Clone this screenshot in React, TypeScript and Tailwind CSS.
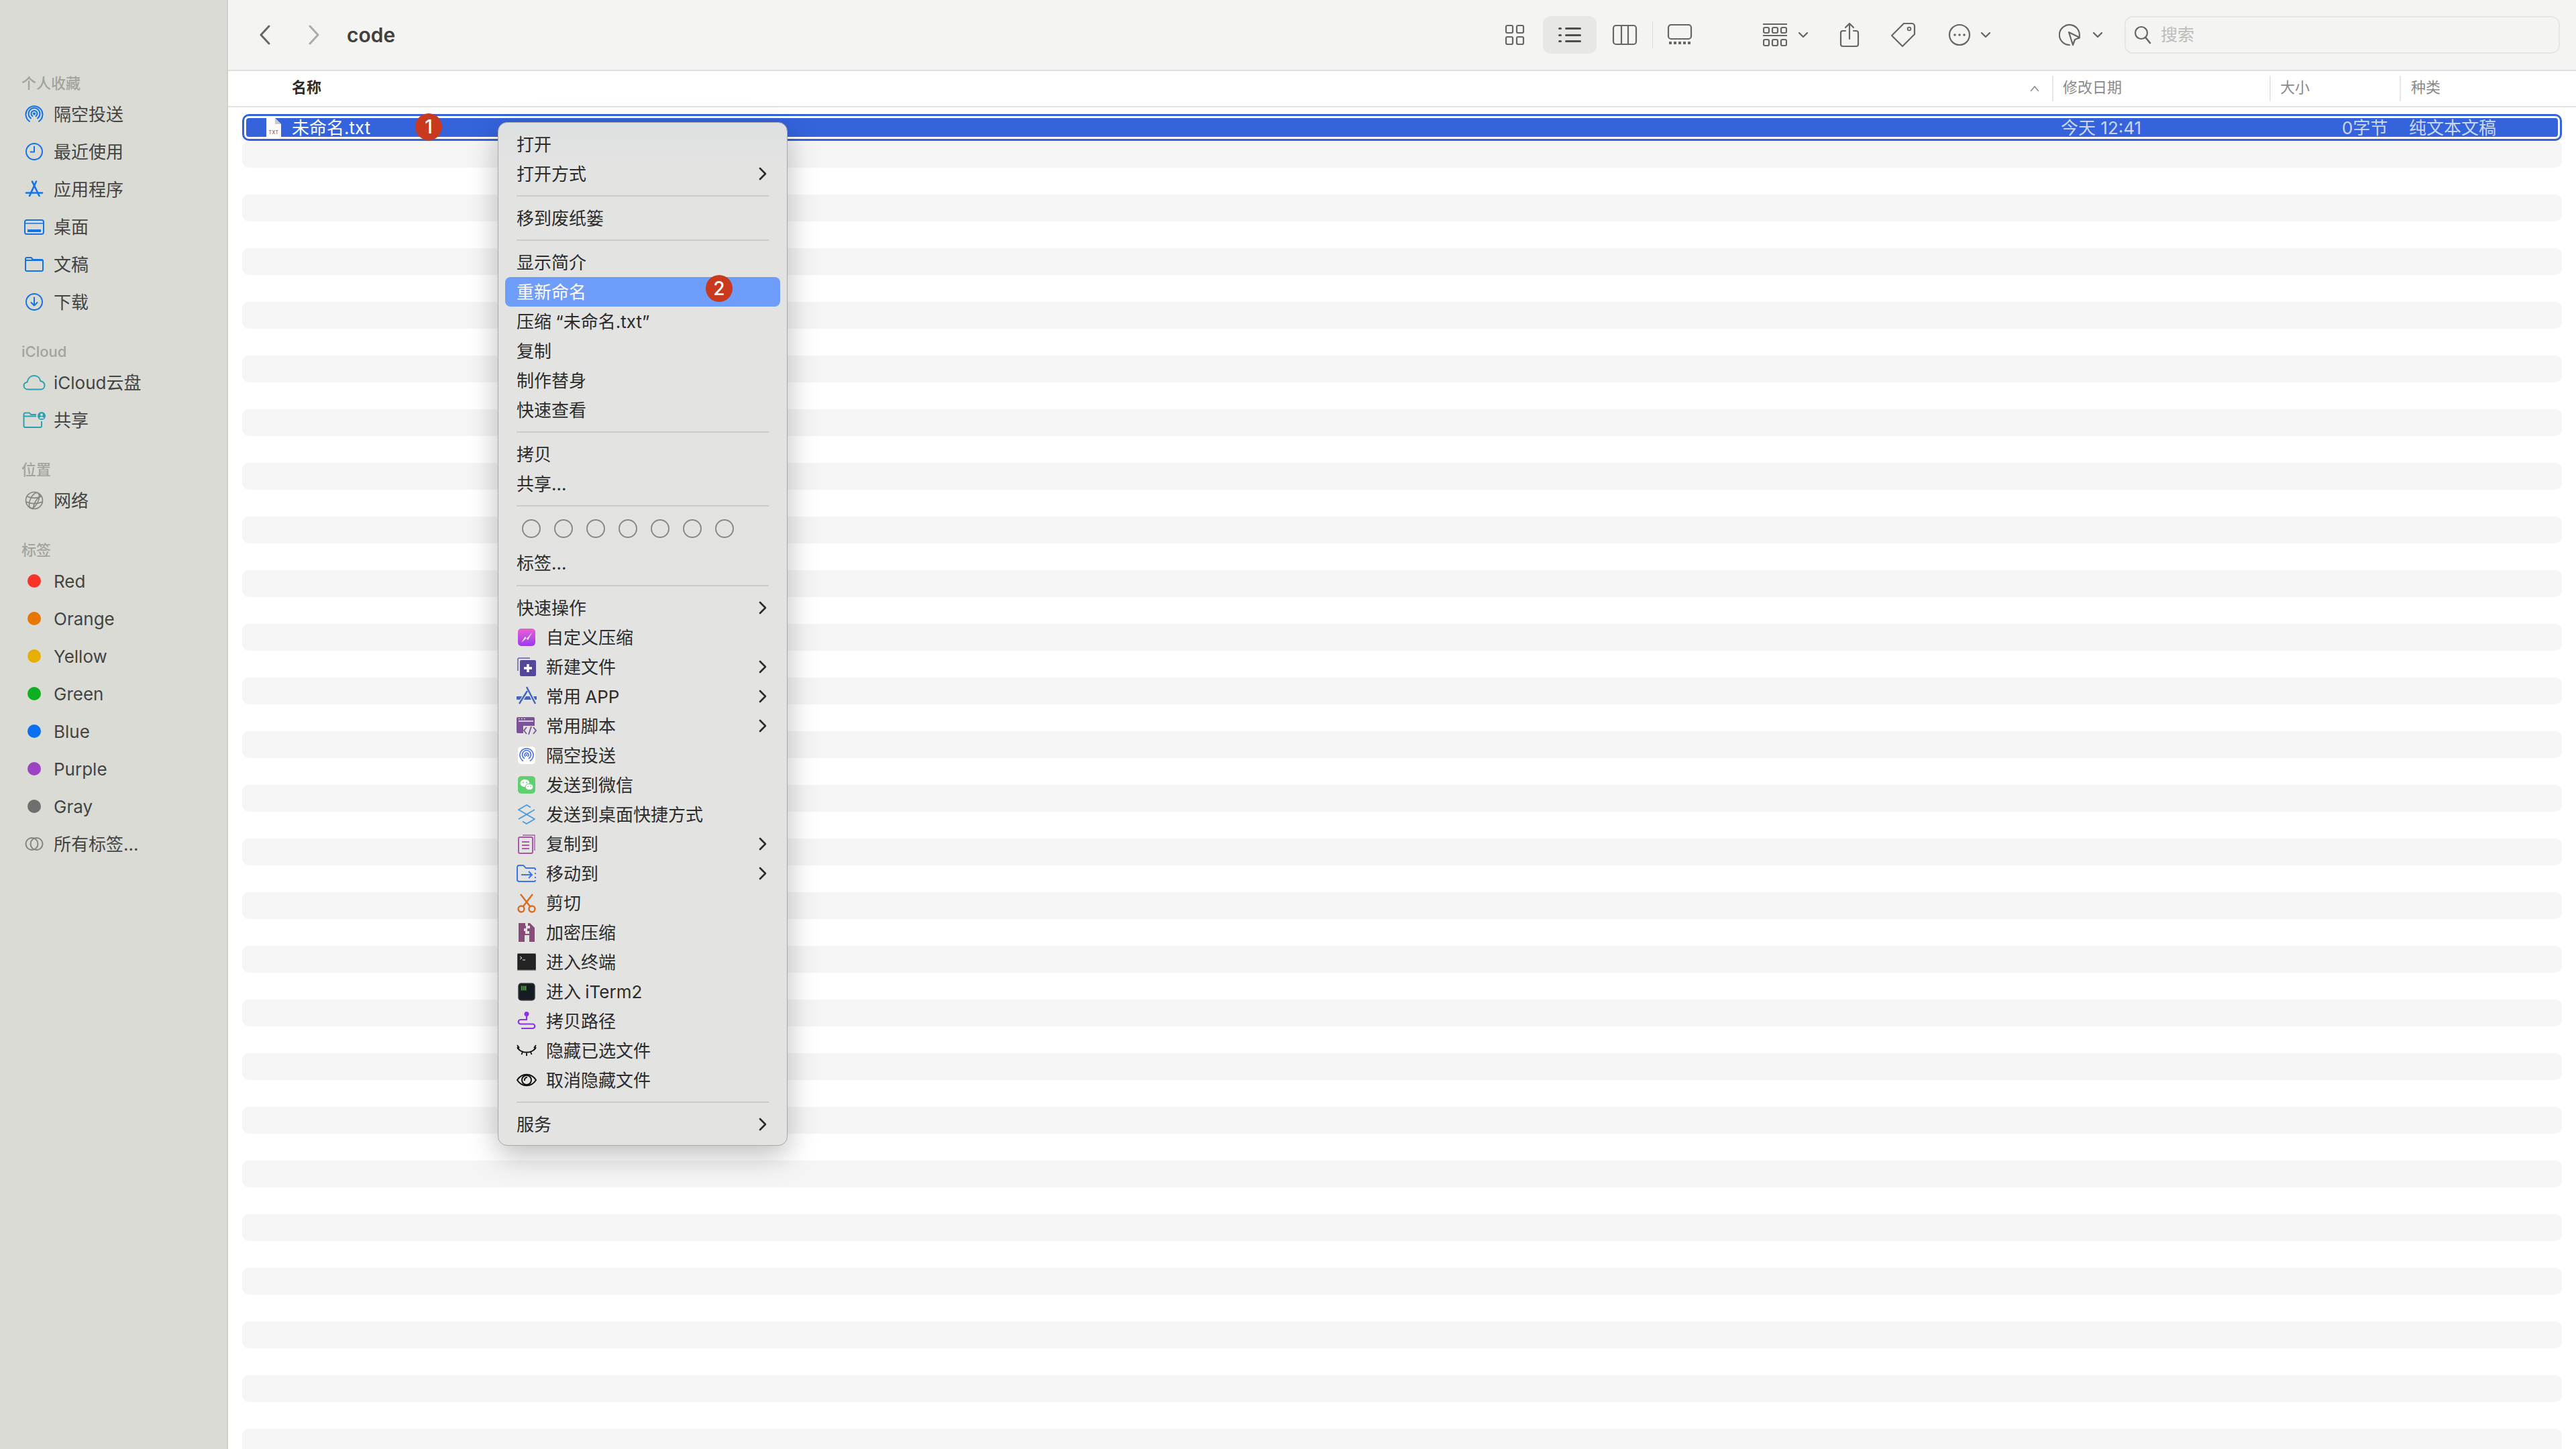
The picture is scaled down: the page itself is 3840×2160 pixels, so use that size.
import type { ReactNode } from "react";

const FONT = "[font-family:Inter,'Noto_Sans_CJK_SC',sans-serif]";

function Svg({ w, h, children, className }: { w: number; h: number; children: ReactNode; className?: string }) {
  return (
    <svg width={w} height={h} viewBox={`0 0 ${w} ${h}`} fill="none" className={className}>
      {children}
    </svg>
  );
}

/* ---------- sidebar icons ---------- */

const blue = "#1473e6";
const teal = "#2b9fb3";

const sideIcons: Record<string, ReactNode> = {
  airdrop: (
    <Svg w={28} h={28}>
      <g stroke={blue} strokeWidth={2} strokeLinecap="round">
        <path d="M7 25A12.5 12.5 0 1 1 21 25" />
        <path d="M9 20.4A8.5 8.5 0 1 1 19 20.4" />
        <path d="M11.5 17.2A4.5 4.5 0 1 1 16.5 17.2" />
      </g>
      <circle cx={14} cy={13.5} r={2} fill={blue} />
    </Svg>
  ),
  clock: (
    <Svg w={28} h={28}>
      <circle cx={14} cy={14} r={12} stroke={blue} strokeWidth={2} />
      <path d="M14 6.5V14.5H8.5" stroke={blue} strokeWidth={2} strokeLinecap="round" strokeLinejoin="round" />
    </Svg>
  ),
  apps: (
    <Svg w={28} h={28}>
      <g stroke={blue} strokeWidth={2.6} strokeLinecap="round">
        <path d="M11 2.5L21.5 24" />
        <path d="M17 2.5L7 24" />
        <path d="M2 19.5H26" />
      </g>
    </Svg>
  ),
  desktop: (
    <Svg w={30} h={24}>
      <rect x={1} y={2} width={28} height={21} rx={3} stroke={blue} strokeWidth={2} />
      <path d="M1 7H29" stroke={blue} strokeWidth={1.5} />
      <rect x={5} y={16} width={20} height={4} fill={blue} />
    </Svg>
  ),
  folder: (
    <Svg w={30} h={24}>
      <path
        d="M2 6V20A2 2 0 0 0 4 22H26A2 2 0 0 0 28 20V7A2 2 0 0 0 26 5H13L10.5 2H4A2 2 0 0 0 2 4V6H28"
        stroke={blue}
        strokeWidth={2}
        strokeLinejoin="round"
      />
    </Svg>
  ),
  download: (
    <Svg w={28} h={28}>
      <circle cx={14} cy={14} r={12} stroke={blue} strokeWidth={2} />
      <path d="M14 7.5V19.5M9.5 15L14 19.5L18.5 15" stroke={blue} strokeWidth={2} strokeLinecap="round" strokeLinejoin="round" />
    </Svg>
  ),
  cloud: (
    <Svg w={34} h={24}>
      <path
        d="M8 22.5C4 22.5 1.5 20 1.5 17C1.5 14 3.7 12 6.5 11.7C7.5 6 11.5 2 17 2C22 2 25.5 5.5 26.3 10C30 10.7 32.5 13.3 32.5 16.5C32.5 20 30 22.5 26.5 22.5Z"
        stroke={teal}
        strokeWidth={2}
        strokeLinejoin="round"
      />
    </Svg>
  ),
  shared: (
    <Svg w={34} h={24}>
      <path
        d="M20 4H12L10 1.5H3.5A2 2 0 0 0 1.5 3.5V21A2 2 0 0 0 3.5 23H26A2 2 0 0 0 28 21V14M1.5 6.5H20"
        stroke={teal}
        strokeWidth={2}
        strokeLinejoin="round"
      />
      <circle cx={28} cy={6} r={6} fill={teal} />
      <circle cx={28} cy={4.2} r={1.9} fill="#dbdbd5" />
      <path d="M24.6 10C25 8 26.4 7.3 28 7.3C29.6 7.3 31 8 31.4 10Z" fill="#dbdbd5" />
    </Svg>
  ),
  globe: (
    <Svg w={28} h={28}>
      <g stroke="#85857f" strokeWidth={1.6}>
        <circle cx={14} cy={14} r={12.5} />
        <ellipse cx={14} cy={14} rx={6} ry={12.5} transform="rotate(25 14 14)" />
        <path d="M3.5 8C10 11 18 11 24.5 8M2 16C9 19.5 19 19.5 26 16" />
        <path d="M24 6.5C17 12 13 19 12.5 26.5" />
      </g>
    </Svg>
  ),
  tags: (
    <Svg w={28} h={24}>
      <circle cx={10.5} cy={12} r={9} stroke="#85857f" strokeWidth={2} />
      <circle cx={17.5} cy={12} r={9} stroke="#85857f" strokeWidth={2} />
    </Svg>
  ),
};

type SideItem = { label: string; icon?: string; dot?: string };

const sections: { title: string; items: SideItem[] }[] = [
  {
    title: "个人收藏",
    items: [
      { label: "隔空投送", icon: "airdrop" },
      { label: "最近使用", icon: "clock" },
      { label: "应用程序", icon: "apps" },
      { label: "桌面", icon: "desktop" },
      { label: "文稿", icon: "folder" },
      { label: "下载", icon: "download" },
    ],
  },
  {
    title: "iCloud",
    items: [
      { label: "iCloud云盘", icon: "cloud" },
      { label: "共享", icon: "shared" },
    ],
  },
  { title: "位置", items: [{ label: "网络", icon: "globe" }] },
  {
    title: "标签",
    items: [
      { label: "Red", dot: "bg-[#fb3327]" },
      { label: "Orange", dot: "bg-[#e67700]" },
      { label: "Yellow", dot: "bg-[#e5b000]" },
      { label: "Green", dot: "bg-[#0db023]" },
      { label: "Blue", dot: "bg-[#0a6ff0]" },
      { label: "Purple", dot: "bg-[#9c42c2]" },
      { label: "Gray", dot: "bg-[#6f6f6f]" },
      { label: "所有标签...", icon: "tags" },
    ],
  },
];

function Sidebar() {
  return (
    <aside className="flex w-[340px] shrink-0 flex-col gap-[28px] border-r-2 border-[#d0d0ca] bg-[#dbdbd5] pt-[106px]">
      {sections.map((s) => (
        <div key={s.title}>
          <div className="flex h-9 items-center pl-[32px] text-[22px] font-medium text-[#a3a39e]">{s.title}</div>
          {s.items.map((item) => (
            <div key={item.label} className="flex h-14 items-center gap-[12px] pl-[34px] text-[26px] text-[#444442]">
              <span className="flex w-[34px] items-center justify-center">
                {item.icon ? sideIcons[item.icon] : <span className={`h-[20px] w-[20px] rounded-full ${item.dot}`} />}
              </span>
              {item.label}
            </div>
          ))}
        </div>
      ))}
    </aside>
  );
}

/* ---------- toolbar ---------- */

const ink = "#666664";

function Chevron({ className }: { className?: string }) {
  return (
    <Svg w={16} h={10} className={className}>
      <path d="M2 2L8 8L14 2" stroke={ink} strokeWidth={2.4} strokeLinecap="round" strokeLinejoin="round" />
    </Svg>
  );
}

function Toolbar() {
  return (
    <header className="flex h-[106px] shrink-0 items-center border-b-2 border-[#dededc] bg-[#f4f4f2]">
      <Svg w={18} h={30} className="ml-[46px]">
        <path d="M15 2L3 15L15 28" stroke="#666" strokeWidth={3} strokeLinecap="round" strokeLinejoin="round" />
      </Svg>
      <Svg w={18} h={30} className="ml-[55px]">
        <path d="M3 2L15 15L3 28" stroke="#aaa" strokeWidth={3} strokeLinecap="round" strokeLinejoin="round" />
      </Svg>
      <span className="ml-[40px] text-[30px] leading-none font-semibold text-[#404040]">code</span>
      <div className="flex-1" />

      <Svg w={30} h={32}>
        <g stroke={ink} strokeWidth={2.2}>
          <rect x={2} y={2} width={10} height={11} rx={2} />
          <rect x={18} y={2} width={10} height={11} rx={2} />
          <rect x={2} y={19} width={10} height={11} rx={2} />
          <rect x={18} y={19} width={10} height={11} rx={2} />
        </g>
      </Svg>
      <div className="ml-[27px] flex h-14 w-20 items-center justify-center rounded-xl bg-[#e7e7e5]">
        <Svg w={36} h={24}>
          <g fill="#4d4d4b">
            <rect x={1} y={1} width={5} height={3} rx={1.5} />
            <rect x={1} y={11} width={5} height={3} rx={1.5} />
            <rect x={1} y={20} width={5} height={3} rx={1.5} />
            <rect x={11} y={1} width={24} height={3} rx={1.5} />
            <rect x={11} y={11} width={24} height={3} rx={1.5} />
            <rect x={11} y={20} width={24} height={3} rx={1.5} />
          </g>
        </Svg>
      </div>
      <Svg w={38} h={32} className="ml-[23px]">
        <rect x={2} y={2} width={34} height={28} rx={4} stroke={ink} strokeWidth={2.2} />
        <path d="M14 2V30M24 2V30" stroke={ink} strokeWidth={2.2} />
      </Svg>
      <div className="ml-[22px] h-10 w-px bg-[#dcdcda]" />
      <Svg w={38} h={32} className="ml-[21px]">
        <rect x={2} y={1} width={34} height={21} rx={4} stroke={ink} strokeWidth={2.2} />
        <path d="M3 28H35" stroke={ink} strokeWidth={4} strokeDasharray="4 3" />
      </Svg>

      <Svg w={36} h={36} className="ml-[105px]">
        <g stroke={ink} strokeWidth={2.2}>
          <path d="M0 2H36M0 19H36" />
          <rect x={1} y={7} width={8} height={8} rx={2} />
          <rect x={14} y={7} width={8} height={8} rx={2} />
          <rect x={27} y={7} width={8} height={8} rx={2} />
          <rect x={1} y={25} width={8} height={9} rx={2} />
          <rect x={14} y={25} width={8} height={9} rx={2} />
          <rect x={27} y={25} width={8} height={9} rx={2} />
        </g>
      </Svg>
      <Chevron className="ml-[16px]" />
      <Svg w={30} h={38} className="ml-[46px]">
        <path
          d="M9 13H5A3 3 0 0 0 2 16V33A3 3 0 0 0 5 36H25A3 3 0 0 0 28 33V16A3 3 0 0 0 25 13H21M15 25V2M9 8L15 2L21 8"
          stroke={ink}
          strokeWidth={2.2}
          strokeLinecap="round"
          strokeLinejoin="round"
        />
      </Svg>
      <Svg w={38} h={38} className="ml-[46px]">
        <path
          d="M20 2H32A4 4 0 0 1 36 6V18L18 36L2 20Z"
          stroke={ink}
          strokeWidth={2.2}
          strokeLinejoin="round"
        />
        <circle cx={28} cy={10} r={2.4} stroke={ink} strokeWidth={1.8} />
      </Svg>
      <Svg w={34} h={34} className="ml-[48px]">
        <circle cx={17} cy={17} r={15} stroke={ink} strokeWidth={2.2} />
        <g fill={ink}>
          <circle cx={10} cy={17} r={1.8} />
          <circle cx={17} cy={17} r={1.8} />
          <circle cx={24} cy={17} r={1.8} />
        </g>
      </Svg>
      <Chevron className="ml-[14px]" />
      <Svg w={34} h={34} className="ml-[101px]">
        <path d="M30 22A15 15 0 1 0 16 32" stroke={ink} strokeWidth={2.2} strokeLinecap="round" />
        <path d="M15 13L31 21L24 24L21 32Z" fill="#f4f4f2" stroke={ink} strokeWidth={2.2} strokeLinejoin="round" />
      </Svg>
      <Chevron className="ml-[16px]" />

      <div className="mr-[24px] ml-[32px] flex h-14 w-[649px] items-center gap-[14px] rounded-xl border-2 border-[#e6e6e4] pl-[12px] text-[25px] text-[#bdbdbb]">
        <Svg w={26} h={28}>
          <circle cx={11} cy={11} r={9} stroke={ink} strokeWidth={2.2} />
          <path d="M17.5 18L24 26" stroke={ink} strokeWidth={2.6} strokeLinecap="round" />
        </Svg>
        <span className="pt-[2px]">搜索</span>
      </div>
    </header>
  );
}

/* ---------- file list ---------- */

function ColumnHeader() {
  const sep = "h-[38px] w-[2px] bg-[#e6e6e6]";
  return (
    <div className="flex h-[54px] shrink-0 items-center border-b-2 border-[#e4e4e4] text-[22px] text-[#8a8a8a]">
      <span className="ml-[95px] flex-1 pb-[3px] font-semibold text-[#2b2b2b]">名称</span>
      <Svg w={14} h={10}>
        <path d="M1 9L7 2L13 9" stroke="#8a8a8a" strokeWidth={1.5} />
      </Svg>
      <div className={`ml-[19px] ${sep}`} />
      <span className="w-[322px] pb-[3px] pl-[14px]">修改日期</span>
      <div className={sep} />
      <span className="w-[192px] pb-[3px] pl-[14px]">大小</span>
      <div className={sep} />
      <span className="w-[261px] pb-[3px] pl-[15px]">种类</span>
    </div>
  );
}

function FileIcon() {
  return (
    <svg width={22} height={28} viewBox="0 0 22 28" className="shrink-0">
      <path d="M0 0H13L22 9V28H0Z" fill="#fafafa" />
      <path d="M13 0L22 9H13Z" fill="#c9c9c9" />
      <text x={11} y={24} textAnchor="middle" fontSize={7} letterSpacing={0.5} fill="#555" fontFamily="Inter, sans-serif">
        TXT
      </text>
    </svg>
  );
}

function SelectedRow() {
  return (
    <div className="mx-[21px] mt-[10px] h-[40px] shrink-0 rounded-[10px] border-[3px] border-[#3563dc] bg-white p-[3px]">
      <div className="flex h-full items-center rounded-[4px] bg-[#3563dc] pl-[30px] text-[26px] text-[#c9d6f6]">
        <FileIcon />
        <span className="ml-[16px] flex-1 text-white">未命名.txt</span>
        <span className="w-[419px]">今天 12:41</span>
        <span className="w-[100px]">0字节</span>
        <span className="w-[222px]">纯文本文稿</span>
      </div>
    </div>
  );
}

function Stripes() {
  return (
    <div className="flex flex-1 flex-col gap-[40px] overflow-hidden px-[21px]">
      {Array.from({ length: 25 }, (_, i) => (
        <div key={i} className="h-[40px] shrink-0 rounded-[10px] bg-[#f4f5f4]" />
      ))}
    </div>
  );
}

/* ---------- context menu ---------- */

const menuIcons: Record<string, ReactNode> = {
  zip: (
    <Svg w={30} h={30}>
      <defs>
        <linearGradient id="zipFill" x1="0" y1="0" x2="0" y2="1">
          <stop offset="0" stopColor="#ea5fd3" />
          <stop offset="1" stopColor="#9a3bf2" />
        </linearGradient>
      </defs>
      <rect x={2} y={2} width={26} height={26} rx={5} fill="url(#zipFill)" />
      <path d="M7 23L13 14L15 17L23 8L17 19L14.5 16.5Z" fill="#fff" />
    </Svg>
  ),
  newfile: (
    <Svg w={30} h={30}>
      <path d="M2 21V4A2 2 0 0 1 4 2H20" stroke="#6a5aa8" strokeWidth={1.5} />
      <rect x={5} y={5} width={24} height={24} rx={2} fill="#54479b" />
      <path d="M17 11V23M11 17H23" stroke="#fff" strokeWidth={3.4} />
    </Svg>
  ),
  app: (
    <Svg w={30} h={30}>
      <path d="M0 15H30V20H0Z" fill="#4464bc" />
      <path d="M15 1L28 26M17 6L4 26" stroke="#e3e3e1" strokeWidth={5} />
      <path d="M15 1L28 26M16 7L4 26" stroke="#4464bc" strokeWidth={2.4} />
    </Svg>
  ),
  script: (
    <Svg w={30} h={30}>
      <rect x={0} y={2} width={27} height={24} rx={2} fill="#7c5299" />
      <path d="M3 8H25" stroke="#eee" strokeWidth={1.6} />
      <path d="M3 4.5H4.5M7 4.5H8.5M11 4.5H12.5" stroke="#eee" strokeWidth={1.4} />
      <rect x={10} y={15} width={20} height={13} fill="#e3e3e1" />
      <path d="M15 17L11 22L15 27M25 17L29 22L25 27M22 16L18 28" stroke="#7c5299" strokeWidth={1.8} />
    </Svg>
  ),
  airdrop: (
    <Svg w={30} h={30}>
      <rect x={2} y={2} width={26} height={26} rx={5} fill="#fff" />
      <g stroke="#3c68f0" strokeWidth={1.5} strokeLinecap="round">
        <path d="M9.5 23A10 10 0 1 1 20.5 23" />
        <path d="M11.5 19.5A6.5 6.5 0 1 1 18.5 19.5" />
        <path d="M13 16.5A3 3 0 1 1 17 16.5" />
      </g>
      <circle cx={15} cy={14.5} r={1.3} fill="#3c68f0" />
    </Svg>
  ),
  wechat: (
    <Svg w={30} h={30}>
      <rect x={2} y={2} width={26} height={26} rx={5} fill="#5fd06f" />
      <ellipse cx={12.5} cy={12.5} rx={7} ry={5.8} fill="#fff" />
      <ellipse cx={19} cy={18} rx={5.8} ry={4.8} fill="#fff" stroke="#5fd06f" strokeWidth={1} />
      <g fill="#5fd06f">
        <circle cx={10} cy={11.5} r={1} />
        <circle cx={15} cy={11.5} r={1} />
        <circle cx={17} cy={17.5} r={0.8} />
        <circle cx={21} cy={17.5} r={0.8} />
      </g>
    </Svg>
  ),
  shortcut: (
    <Svg w={30} h={30}>
      <g stroke="#4a9be0" strokeWidth={2} strokeLinejoin="round">
        <path d="M21 4.5L15 1L3 8L15 15L27 8" />
        <path d="M9 25.5L15 29L27 22L15 15L3 22" />
      </g>
    </Svg>
  ),
  copy: (
    <Svg w={30} h={30}>
      <path d="M9 2H27V25" stroke="#a85aa8" strokeWidth={1.4} />
      <rect x={3} y={5} width={21} height={24} rx={2} stroke="#a85aa8" strokeWidth={2} />
      <path d="M8 12H19M8 17H19M8 22H19" stroke="#a85aa8" strokeWidth={2} />
    </Svg>
  ),
  move: (
    <Svg w={30} h={30}>
      <path
        d="M28 10V9A2 2 0 0 0 26 7H14L10 3H4A3 3 0 0 0 1 6V24A3 3 0 0 0 4 27H26A2 2 0 0 0 28 25M28 14V16M28 20V22"
        stroke="#3c74f0"
        strokeWidth={2}
      />
      <path d="M7 17H23M18 12L23 17L18 22" stroke="#3c74f0" strokeWidth={2} />
    </Svg>
  ),
  cut: (
    <Svg w={30} h={30}>
      <g stroke="#d96a20" strokeWidth={2.4}>
        <path d="M6 2L20 20M24 2L10 20" />
        <circle cx={7} cy={24} r={4.5} />
        <circle cx={23} cy={24} r={4.5} />
      </g>
    </Svg>
  ),
  archive: (
    <Svg w={30} h={30}>
      <path d="M3 1H20L27 8V29H3Z" fill="#864d78" />
      <path d="M13 1H17V5H20V9H16V13H19V17H13V13H11V9H14V5H13Z" fill="#e3e3e1" />
      <rect x={12} y={19} width={7} height={10} fill="#e3e3e1" />
    </Svg>
  ),
  terminal: (
    <Svg w={30} h={30}>
      <rect x={1} y={4} width={28} height={24} fill="#8e8e8c" />
      <rect x={2} y={3} width={26} height={23} fill="#242424" stroke="#111" />
      <path d="M5 7L8 9L5 11M9 12H13" stroke="#eee" strokeWidth={1} />
    </Svg>
  ),
  iterm: (
    <Svg w={30} h={30}>
      <rect x={3} y={3} width={24} height={25} rx={4} fill="#151d22" stroke="#3b3b3b" strokeWidth={1.5} />
      <rect x={6} y={6} width={9} height={8} fill="#26422a" />
      <path d="M8 7V13M11 7V13M13.5 7V13" stroke="#50c83c" strokeWidth={1.2} />
    </Svg>
  ),
  path: (
    <Svg w={30} h={30}>
      <circle cx={15} cy={4.5} r={3.5} fill="#8b32e6" />
      <path d="M15 6V13H6A3.2 3.2 0 0 0 6 19.5H24A3.2 3.2 0 0 1 24 26H8" stroke="#8b32e6" strokeWidth={2.2} strokeLinecap="round" />
    </Svg>
  ),
  hide: (
    <Svg w={30} h={30}>
      <path
        d="M1 11C8 20 22 20 29 11M1 10L4.5 14M29 10L25.5 14M9 17L7.5 21M15 19V23M21 17L22.5 21M1 7L4 11M29 7L26 11"
        stroke="#111"
        strokeWidth={1.8}
      />
    </Svg>
  ),
  show: (
    <Svg w={30} h={30}>
      <path d="M1 15C8 4 22 4 29 15C22 26 8 26 1 15Z" stroke="#111" strokeWidth={2} />
      <circle cx={15} cy={15} r={7} stroke="#111" strokeWidth={2} />
      <path d="M12 16A4 4 0 0 1 16 11" stroke="#111" strokeWidth={2} />
    </Svg>
  ),
};

function SubArrow() {
  return (
    <Svg w={14} h={22} className="absolute top-1/2 right-[19px] -translate-y-1/2">
      <path d="M3 3L11 11L3 19" stroke="#2a2a2a" strokeWidth={2.6} strokeLinecap="round" strokeLinejoin="round" />
    </Svg>
  );
}

function MenuRow({ label, icon, sub, active, badge }: { label: string; icon?: string; sub?: boolean; active?: boolean; badge?: ReactNode }) {
  return (
    <div
      className={`relative mx-[10px] flex h-11 items-center gap-[14px] rounded-lg px-[17px] text-[26px] [word-spacing:-1px] ${
        active ? "bg-[#6e9dfb] text-white" : "text-[#2c2c2c]"
      }`}
    >
      {icon && <span className="flex h-[30px] w-[30px] shrink-0 items-center justify-center">{menuIcons[icon]}</span>}
      {label}
      {sub && <SubArrow />}
      {badge}
    </div>
  );
}

function MenuSep({ tall }: { tall?: boolean }) {
  return (
    <div className={`flex items-center px-[27px] ${tall ? "h-[23px]" : "h-[22px]"}`}>
      <div className="h-[2px] w-full bg-[#cbcbc9]" />
    </div>
  );
}

function Badge({ n, className }: { n: string; className: string }) {
  return (
    <span
      className={`absolute flex h-[40px] w-[40px] items-center justify-center rounded-full bg-[#c8391e] text-[28px] font-medium text-white ${className}`}
    >
      {n}
    </span>
  );
}

function ContextMenu() {
  return (
    <div className="absolute top-[182px] left-[742px] w-[432px] rounded-[14px] border border-[#a9a9a7] bg-[#e3e3e1] bg-[linear-gradient(180deg,#dde1e1_0px,#e3e3e1_60px)] pt-[10px] pb-[9px] shadow-[0_14px_44px_rgba(0,0,0,0.26)]">
      <MenuRow label="打开" />
      <MenuRow label="打开方式" sub />
      <MenuSep />
      <MenuRow label="移到废纸篓" />
      <MenuSep />
      <MenuRow label="显示简介" />
      <MenuRow label="重新命名" active badge={<Badge n="2" className="top-[-3px] left-[299px]" />} />
      <MenuRow label="压缩 “未命名.txt”" />
      <MenuRow label="复制" />
      <MenuRow label="制作替身" />
      <MenuRow label="快速查看" />
      <MenuSep />
      <MenuRow label="拷贝" />
      <MenuRow label="共享..." />
      <MenuSep />
      <div className="flex h-[52px] gap-[20px] px-[35px] pt-[9px]">
        {Array.from({ length: 7 }, (_, i) => (
          <span key={i} className="h-[28px] w-[28px] rounded-full border-[2.5px] border-[#8a8a88]" />
        ))}
      </div>
      <MenuRow label="标签..." />
      <MenuSep tall />
      <MenuRow label="快速操作" sub />
      <MenuRow label="自定义压缩" icon="zip" />
      <MenuRow label="新建文件" icon="newfile" sub />
      <MenuRow label="常用 APP" icon="app" sub />
      <MenuRow label="常用脚本" icon="script" sub />
      <MenuRow label="隔空投送" icon="airdrop" />
      <MenuRow label="发送到微信" icon="wechat" />
      <MenuRow label="发送到桌面快捷方式" icon="shortcut" />
      <MenuRow label="复制到" icon="copy" sub />
      <MenuRow label="移动到" icon="move" sub />
      <MenuRow label="剪切" icon="cut" />
      <MenuRow label="加密压缩" icon="archive" />
      <MenuRow label="进入终端" icon="terminal" />
      <MenuRow label="进入 iTerm2" icon="iterm" />
      <MenuRow label="拷贝路径" icon="path" />
      <MenuRow label="隐藏已选文件" icon="hide" />
      <MenuRow label="取消隐藏文件" icon="show" />
      <MenuSep />
      <MenuRow label="服务" sub />
    </div>
  );
}

export default function App() {
  return (
    <div className={`relative flex h-[2160px] w-[3840px] overflow-hidden bg-white ${FONT}`}>
      <Sidebar />
      <main className="flex min-w-0 flex-1 flex-col">
        <Toolbar />
        <ColumnHeader />
        <SelectedRow />
        <Stripes />
      </main>
      <Badge n="1" className="top-[169px] left-[619px]" />
      <ContextMenu />
    </div>
  );
}
